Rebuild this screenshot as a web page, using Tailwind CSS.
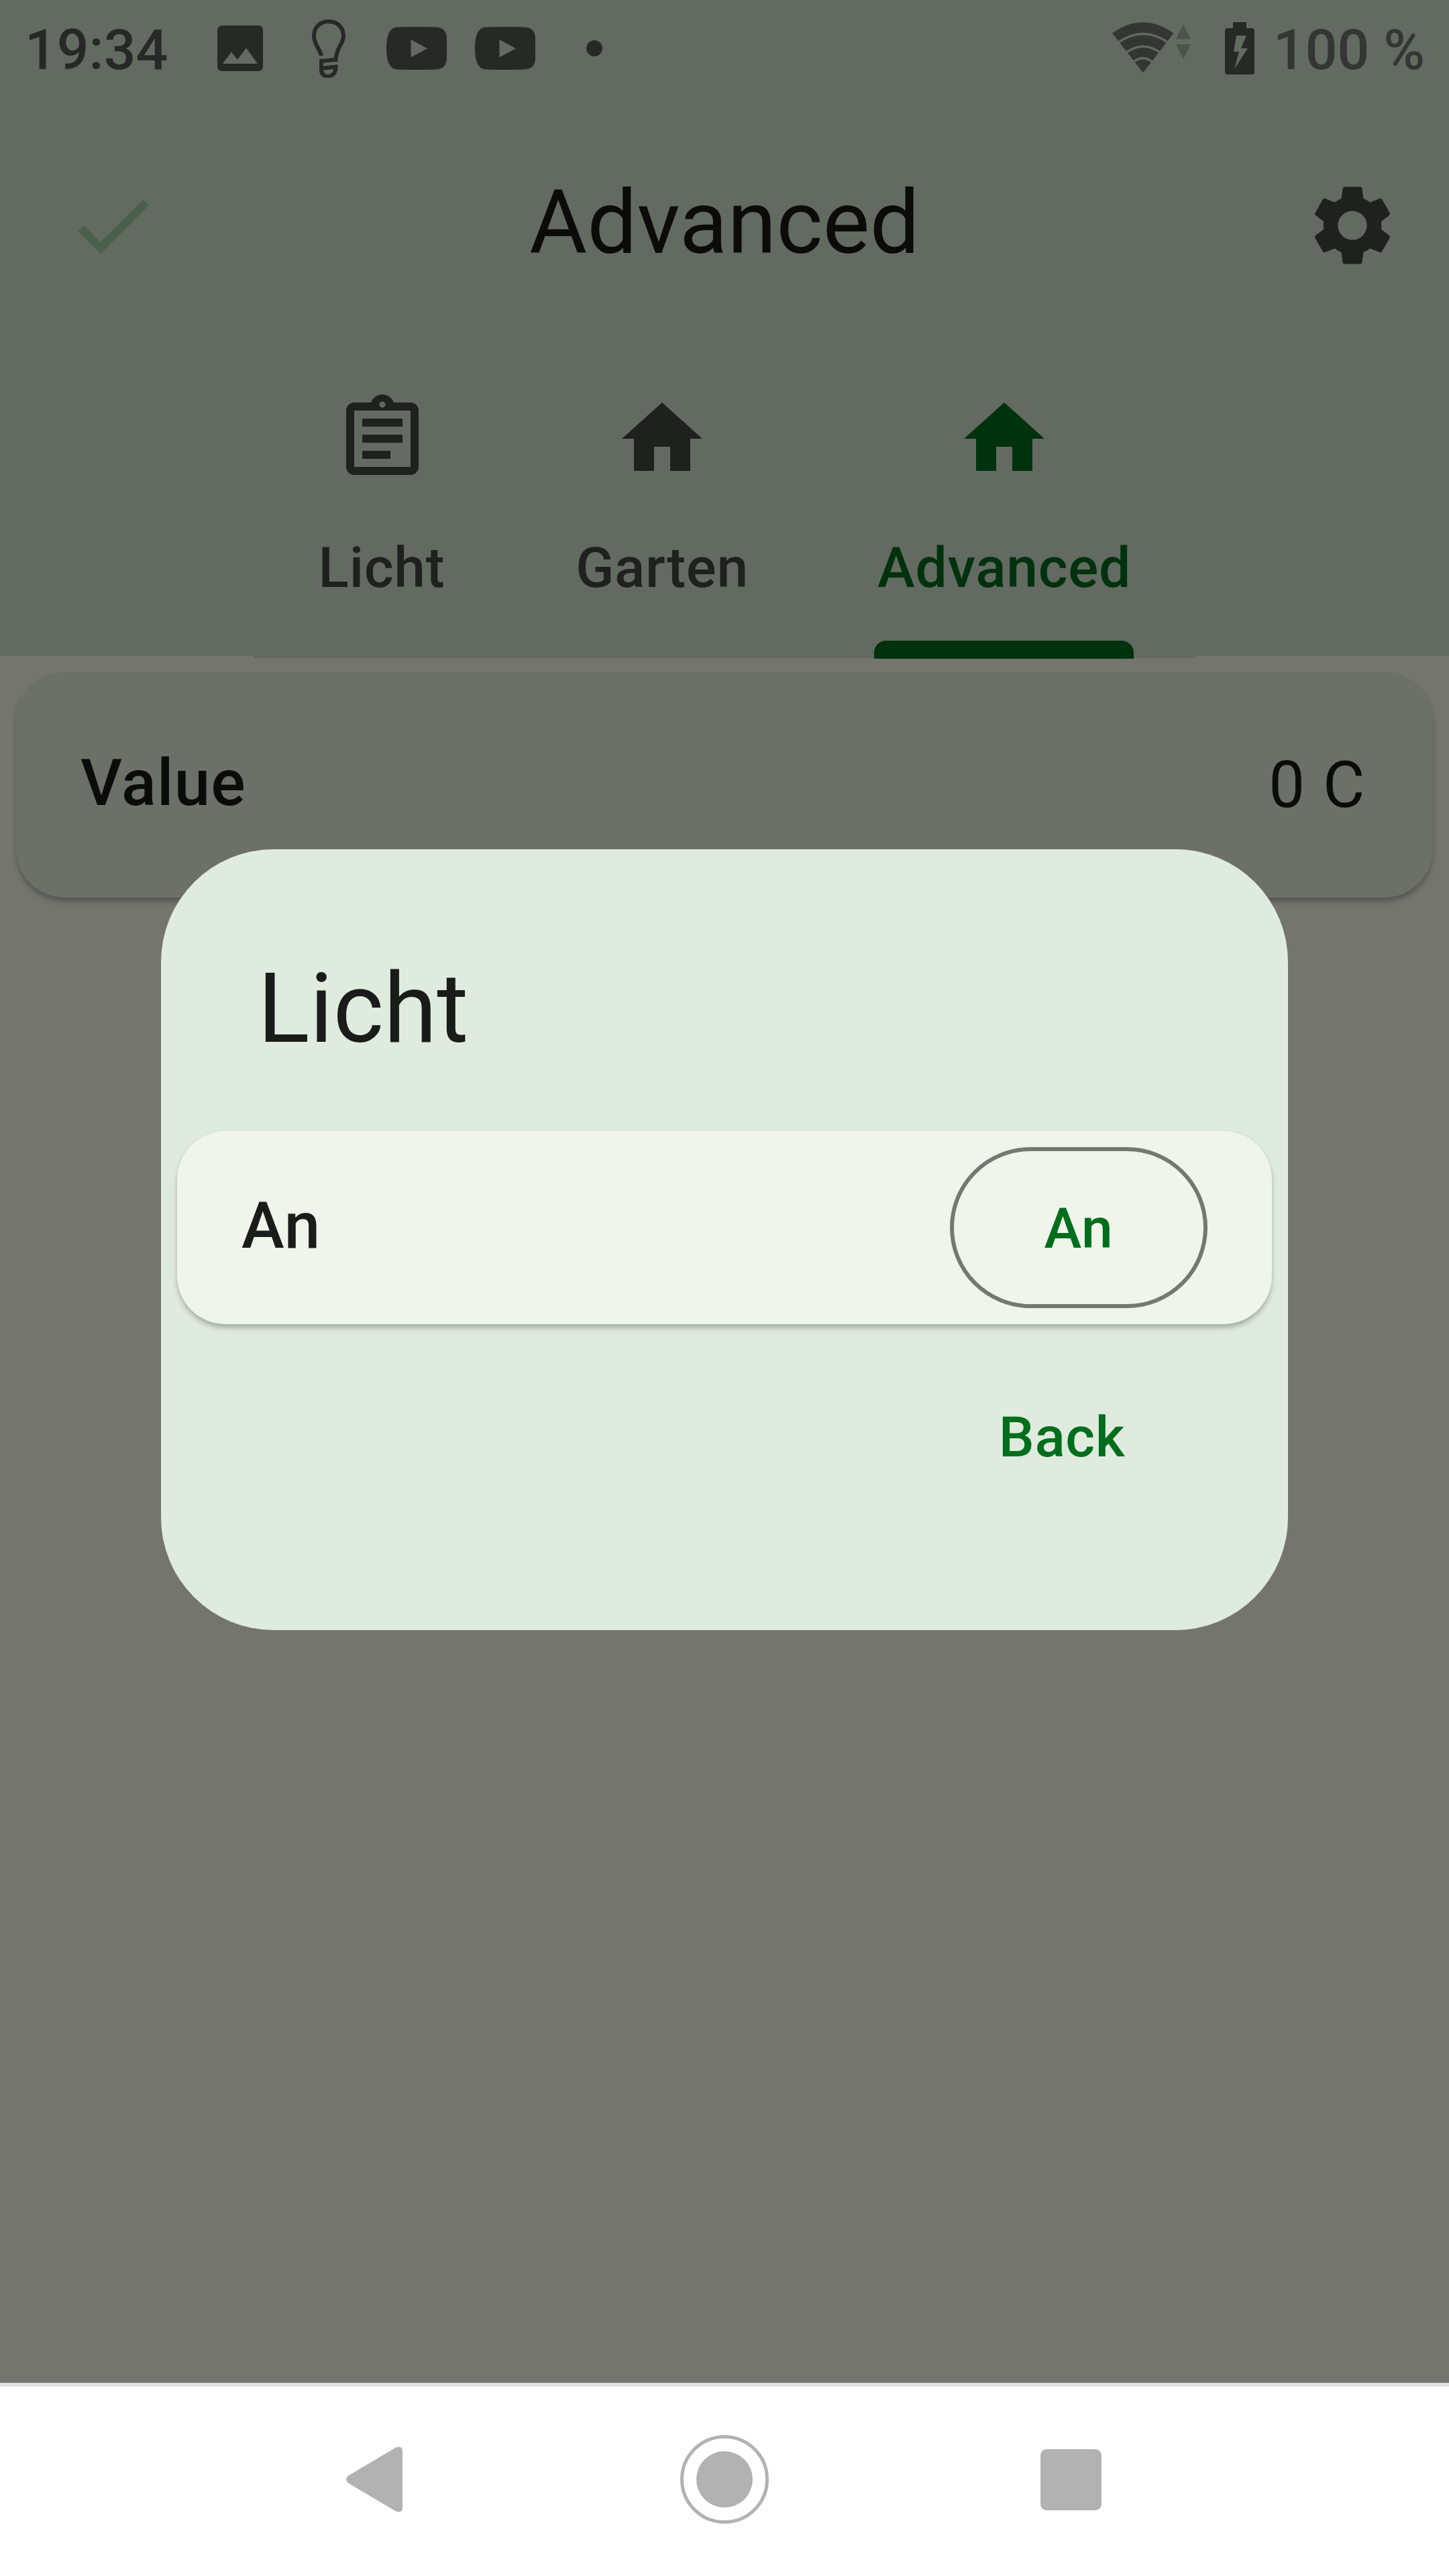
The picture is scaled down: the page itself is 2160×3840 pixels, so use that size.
<!DOCTYPE html>
<html lang="de">
<head>
<meta charset="utf-8">
<title>Advanced</title>
<script src="https://cdn.jsdelivr.net/npm/@tailwindcss/browser@4"></script>
</head>
<body class="w-[2160px] h-[3840px] overflow-hidden bg-[#74756f] font-['Roboto',sans-serif]">
<div class="relative flex h-[3840px] w-[2160px] flex-col">

  <header class="flex h-[978px] shrink-0 flex-col bg-[#636a62]">
    <!-- status bar -->
    <div class="flex h-36 shrink-0 items-center justify-between pl-[37px] pr-[36px] text-[84px] font-medium leading-none text-[#272926]">
      <div class="flex h-36 items-center">
        <span class="w-[287px] pt-[6px]">19:34</span>
        <svg class="h-[69px] w-[69px]" viewBox="0 0 69 69"><path fill="currentColor" fill-rule="evenodd" d="M8 0H61Q68 0 68 8V61Q68 68 61 68H8Q0 68 0 61V8Q0 0 8 0ZM8 57H60L43 33.500L30 51L21 39.500Z"/></svg>
        <svg class="ml-[72px] h-[88px] w-[50px]" viewBox="0 0 50 88" fill="none" stroke="currentColor" stroke-width="6"><path d="M14 55C12 45 3 38 3 25.500C3 12 13 4 25 4S47 12 47 25.500C47 38 36 43 35.500 61L14 63V80M14 74L35.500 71.500C36 90 14 90 14 76"/></svg>
        <svg class="ml-[61px] h-[64px] w-[90px]" viewBox="0 0 90 64"><path fill="currentColor" fill-rule="evenodd" d="M16 .5Q45-.5 74 .5Q90 1 90 18V46Q90 63 74 63.500Q45 64.500 16 63.500Q0 63 0 32T16 .5ZM36.500 19V45.500L61 32.300Z"/></svg>
        <svg class="ml-[42px] h-[64px] w-[90px]" viewBox="0 0 90 64"><path fill="currentColor" fill-rule="evenodd" d="M16 .5Q45-.5 74 .5Q90 1 90 18V46Q90 63 74 63.500Q45 64.500 16 63.500Q0 63 0 32T16 .5ZM36.500 19V45.500L61 32.300Z"/></svg>
        <span class="ml-[76px] size-6 rounded-full bg-[#272926]"></span>
      </div>
      <div class="flex h-36 items-center">
        <svg class="h-36 w-[120px]" viewBox="1656 0 120 144"><path fill="#333633" d="M1657 49.500Q1702 17 1748.500 49.500L1703 108.500Z"/><g fill="none" stroke="#636a62" stroke-width="3.500"><path d="M1665 64Q1703 37 1741 64M1676 79.500Q1703 59 1730 79.500M1687 93.500Q1703 80 1718 93.500"/></g><path fill="#4b534b" d="M1752 58.500H1774L1763 36ZM1752 66H1774L1763 88.500Z"/></svg>
        <svg class="ml-[49px] mr-px h-[78px] w-[44px]" viewBox="0 0 44 78"><path fill="currentColor" fill-rule="evenodd" d="M12 0H32V9H40Q44 9 44 13V74Q44 78 40 78H4Q0 78 0 74V13Q0 9 4 9H12ZM17 20L13 44H21L14 70L34 39H24L32 20Z"/></svg>
        <span class="ml-[27px] pt-[6px] text-[#333633]">100 %</span>
      </div>
    </div>

    <!-- toolbar -->
    <div class="grid h-96 shrink-0 grid-cols-[1fr_auto_1fr] items-center pl-[96px] pr-[72px]">
      <svg class="size-36" viewBox="0 0 24 24" fill="#49604a"><path d="M9 16.170L4.830 12l-1.420 1.410L9 19 21 7l-1.410-1.410z"/></svg>
      <h1 class="pb-2 pr-[24px] text-[132px] leading-none text-[#0b0c0a]">Advanced</h1>
      <svg class="size-36 justify-self-end" viewBox="0 0 24 24" fill="#1f211e"><path d="M19.140 12.940c.04-.3.060-.61.060-.94 0-.32-.02-.64-.07-.94l2.030-1.580c.18-.14.230-.41.120-.61l-1.920-3.320c-.12-.22-.37-.29-.59-.22l-2.390.96c-.5-.38-1.030-.7-1.620-.94l-.36-2.540c-.04-.24-.24-.41-.48-.41h-3.840c-.24 0-.43.170-.47.410l-.36 2.540c-.59.240-1.130.570-1.620.940l-2.390-.96c-.22-.08-.47 0-.59.220L2.740 8.870c-.12.210-.08.470.12.610l2.030 1.580c-.05.300-.09.630-.09.940s.02.640.07.940l-2.030 1.580c-.18.140-.23.410-.12.610l1.920 3.320c.12.220.37.290.59.220l2.390-.96c.5.380 1.030.7 1.620.94l.36 2.540c.05.240.24.410.48.410h3.840c.24 0 .44-.17.470-.41l.36-2.540c.59-.24 1.130-.56 1.620-.94l2.390.96c.22.080.47 0 .59-.22l1.920-3.320c.12-.22.070-.47-.12-.61l-2.010-1.580zM12 15.600c-1.980 0-3.600-1.620-3.600-3.600s1.620-3.600 3.600-3.600 3.600 1.620 3.600 3.600-1.620 3.600-3.600 3.600z"/></svg>
    </div>

    <!-- tabs -->
    <nav class="ml-[378px] flex h-[453px] w-[1404px] shrink-0 border-b-3 border-[#64665f] text-[84px] font-medium text-[#1f211e]">
      <div class="flex w-[384px] flex-col items-center pt-[54px]">
        <svg class="size-36" viewBox="0 0 24 24" fill="currentColor"><path d="M7 15h7v2H7zm0-4h10v2H7zm0-4h10v2H7zm12-4h-4.180C14.400 1.840 13.300 1 12 1c-1.300 0-2.400.84-2.820 2H5c-.14 0-.27.010-.4.040-.39.080-.74.280-1.010.550-.18.180-.33.400-.43.640-.1.230-.16.490-.16.770v14c0 .27.060.54.160.78s.25.450.43.640c.27.270.62.470 1.010.550.130.020.260.030.400.030h14c1.100 0 2-.9 2-2V5c0-1.100-.9-2-2-2zm-7-.25c.410 0 .75.340.75.75s-.34.750-.75.750-.75-.34-.75-.75.340-.75.750-.75zM19 19H5V5h14v14z"/></svg>
        <span class="mt-[61px] pr-[2px] leading-[120px] tracking-[0.7px]">Licht</span>
      </div>
      <div class="flex w-[450px] flex-col items-center pt-[54px]">
        <svg class="size-36" viewBox="0 0 24 24" fill="currentColor"><path d="M10 20v-6h4v6h5v-8h3L12 3 2 12h3v8z"/></svg>
        <span class="mt-[61px] leading-[120px] tracking-[0.6px]">Garten</span>
      </div>
      <div class="relative flex w-[570px] flex-col items-center pt-[54px] text-[#00320d]">
        <svg class="size-36" viewBox="0 0 24 24" fill="currentColor"><path d="M10 20v-6h4v6h5v-8h3L12 3 2 12h3v8z"/></svg>
        <span class="mt-[61px] leading-[120px] tracking-[0.7px]">Advanced</span>
        <span class="absolute bottom-[-4px] left-[91px] h-[27px] w-[387px] rounded-t-[18px] bg-[#00320d]"></span>
      </div>
    </nav>
  </header>

  <main class="grow px-6 pt-6">
    <div class="flex h-[336px] items-center justify-between rounded-[72px] bg-[#6d6f69] pl-[96px] pr-[100px] text-[96px] leading-none text-[#0b0c0a] shadow-[0_6px_8px_-1px_rgba(0,0,0,0.3)]">
      <span class="pb-[6px] font-medium tracking-[1.2px]">Value</span>
      <span class="tracking-[1.5px]">0 C</span>
    </div>
  </main>

  <!-- system navigation -->
  <footer class="flex h-72 shrink-0 items-center border-t-6 border-[#e0e0e0] bg-white pb-[6px] pl-[516px]">
    <svg class="h-[100px] w-[84px]" viewBox="0 0 84 100" fill="#b2b2b2"><path d="M4 44L74 2.500Q84-1 84 8V92Q84 101 74 97.500L4 56Q-4 50 4 44Z"/></svg>
    <svg class="ml-[414px] size-[132px]" viewBox="0 0 132 132"><circle cx="66" cy="66" r="63.500" fill="none" stroke="#b2b2b2" stroke-width="5"/><circle cx="66" cy="66" r="42" fill="#b2b2b2"/></svg>
    <span class="ml-[405px] size-[91px] rounded-[9px] bg-[#b2b2b2]"></span>
  </footer>

  <!-- dialog -->
  <section role="dialog" class="absolute left-[240px] top-[1266px] flex h-[1164px] w-[1680px] flex-col rounded-[168px] bg-[#e0ebdf] px-6 pt-[142px] text-[#1a1c19]">
    <h2 class="mb-[86px] pl-[120px] text-[144px] leading-[192px]">Licht</h2>
    <div class="flex h-72 shrink-0 items-center justify-between rounded-[72px] bg-[#eff5ea] pl-[96px] pr-[96px] shadow-[0_6px_8px_-1px_rgba(0,0,0,0.28),0_0_4px_rgba(0,0,0,0.04)]">
      <span class="pb-[6px] text-[96px] font-medium leading-none tracking-[0.9px]">An</span>
      <button class="flex h-60 w-96 items-center justify-center rounded-full border-6 border-[#72796f] pt-[3px] text-[84px] font-medium leading-none tracking-[0.6px] text-[#006e1c]">An</button>
    </div>
    <button class="mr-[150px] mt-[49px] h-60 w-[326px] self-end text-[84px] font-medium leading-none tracking-[0.6px] text-[#006e1c]">Back</button>
  </section>
</div>
</body>
</html>
